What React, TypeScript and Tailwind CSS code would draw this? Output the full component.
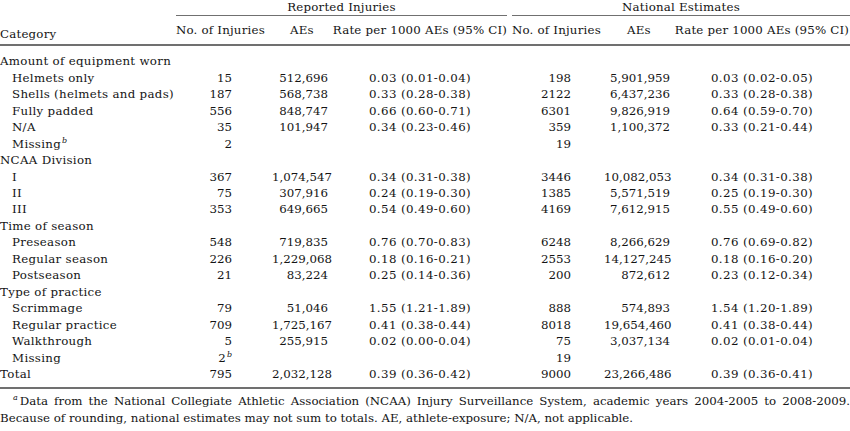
type Row = {
  label: string;
  labelSup?: string;
  indent?: boolean;
  repNo?: string;
  repNoSup?: string;
  repAE?: string;
  repRate?: string;
  natNo?: string;
  natAE?: string;
  natRate?: string;
};

const rows: Row[] = [
  { label: "Amount of equipment worn" },
  { label: "Helmets only", indent: true, repNo: "15", repAE: "512,696", repRate: "0.03 (0.01-0.04)", natNo: "198", natAE: "5,901,959", natRate: "0.03 (0.02-0.05)" },
  { label: "Shells (helmets and pads)", indent: true, repNo: "187", repAE: "568,738", repRate: "0.33 (0.28-0.38)", natNo: "2122", natAE: "6,437,236", natRate: "0.33 (0.28-0.38)" },
  { label: "Fully padded", indent: true, repNo: "556", repAE: "848,747", repRate: "0.66 (0.60-0.71)", natNo: "6301", natAE: "9,826,919", natRate: "0.64 (0.59-0.70)" },
  { label: "N/A", indent: true, repNo: "35", repAE: "101,947", repRate: "0.34 (0.23-0.46)", natNo: "359", natAE: "1,100,372", natRate: "0.33 (0.21-0.44)" },
  { label: "Missing", labelSup: "b", indent: true, repNo: "2", natNo: "19" },
  { label: "NCAA Division" },
  { label: "I", indent: true, repNo: "367", repAE: "1,074,547", repRate: "0.34 (0.31-0.38)", natNo: "3446", natAE: "10,082,053", natRate: "0.34 (0.31-0.38)" },
  { label: "II", indent: true, repNo: "75", repAE: "307,916", repRate: "0.24 (0.19-0.30)", natNo: "1385", natAE: "5,571,519", natRate: "0.25 (0.19-0.30)" },
  { label: "III", indent: true, repNo: "353", repAE: "649,665", repRate: "0.54 (0.49-0.60)", natNo: "4169", natAE: "7,612,915", natRate: "0.55 (0.49-0.60)" },
  { label: "Time of season" },
  { label: "Preseason", indent: true, repNo: "548", repAE: "719,835", repRate: "0.76 (0.70-0.83)", natNo: "6248", natAE: "8,266,629", natRate: "0.76 (0.69-0.82)" },
  { label: "Regular season", indent: true, repNo: "226", repAE: "1,229,068", repRate: "0.18 (0.16-0.21)", natNo: "2553", natAE: "14,127,245", natRate: "0.18 (0.16-0.20)" },
  { label: "Postseason", indent: true, repNo: "21", repAE: "83,224", repRate: "0.25 (0.14-0.36)", natNo: "200", natAE: "872,612", natRate: "0.23 (0.12-0.34)" },
  { label: "Type of practice" },
  { label: "Scrimmage", indent: true, repNo: "79", repAE: "51,046", repRate: "1.55 (1.21-1.89)", natNo: "888", natAE: "574,893", natRate: "1.54 (1.20-1.89)" },
  { label: "Regular practice", indent: true, repNo: "709", repAE: "1,725,167", repRate: "0.41 (0.38-0.44)", natNo: "8018", natAE: "19,654,460", natRate: "0.41 (0.38-0.44)" },
  { label: "Walkthrough", indent: true, repNo: "5", repAE: "255,915", repRate: "0.02 (0.00-0.04)", natNo: "75", natAE: "3,037,134", natRate: "0.02 (0.01-0.04)" },
  { label: "Missing", indent: true, repNo: "2", repNoSup: "b", natNo: "19" },
  { label: "Total", repNo: "795", repAE: "2,032,128", repRate: "0.39 (0.36-0.42)", natNo: "9000", natAE: "23,266,486", natRate: "0.39 (0.36-0.41)" },
];

function Sup({ children }: { children: string }) {
  return <span className="relative top-[-5px] ml-[1px] text-[8px] italic leading-none">{children}</span>;
}

export default function App() {
  return (
    <div className="w-[850px] h-[431px] overflow-hidden bg-white text-[#141414] text-[11.8px] leading-[14px]" style={{ fontFamily: '"DejaVu Serif", serif' }}>
      <table className="w-[850px] table-fixed border-collapse">
        <colgroup>
          <col className="w-[176px]" />
          <col className="w-[96px]" />
          <col className="w-[60px]" />
          <col className="w-[176px]" />
          <col className="w-[96px]" />
          <col className="w-[70px]" />
          <col className="w-[176px]" />
        </colgroup>
        <thead className="tracking-[0.2px]">
          <tr className="h-[16px]">
            <th rowSpan={2} className="p-0 pb-[3px] text-left align-bottom font-normal border-b-2 border-[#707070]">
              Category
            </th>
            <th colSpan={3} className="p-0 align-top font-normal">
              <div className="mr-[1px] border-b border-[#707070] pb-[1px] text-center">Reported Injuries</div>
            </th>
            <th colSpan={3} className="p-0 align-top font-normal">
              <div className="ml-[4px] border-b border-[#707070] pb-[1px] text-center">National Estimates</div>
            </th>
          </tr>
          <tr className="h-[29px] border-b-2 border-[#707070]">
            <th className="p-0 text-left font-normal whitespace-nowrap">No. of Injuries</th>
            <th className="p-0 text-center font-normal">AEs</th>
            <th className="p-0 text-center font-normal whitespace-nowrap">Rate per 1000 AEs (95% CI)</th>
            <th className="p-0 pl-[4px] text-left font-normal whitespace-nowrap">No. of Injuries</th>
            <th className="p-0 text-center font-normal">AEs</th>
            <th className="p-0 text-center font-normal whitespace-nowrap">Rate per 1000 AEs (95% CI)</th>
          </tr>
        </thead>
        <tbody className="border-b-2 border-[#707070]">
          <tr className="h-[8px]">
            <td colSpan={7} className="p-0" />
          </tr>
          {rows.map((row, i) => (
            <tr key={i} className="h-[16.47px]">
              <td className={`p-0 whitespace-nowrap tracking-[0.3px] ${row.indent ? "pl-[12px]" : ""}`}>
                {row.label}
                {row.labelSup ? <Sup>{row.labelSup}</Sup> : null}
              </td>
              <td className="p-0 pr-[40px] text-right">
                {row.repNo}
                {row.repNoSup ? <Sup>{row.repNoSup}</Sup> : null}
              </td>
              <td className="p-0 pr-[4px] text-right">{row.repAE}</td>
              <td className="p-0 text-center whitespace-nowrap tracking-[0.4px]">{row.repRate}</td>
              <td className="p-0 pr-[33px] text-right">{row.natNo}</td>
              <td className="p-0 pr-[4px] text-right">{row.natAE}</td>
              <td className="p-0 text-center whitespace-nowrap tracking-[0.4px]">{row.natRate}</td>
            </tr>
          ))}
          <tr className="h-[6px]">
            <td colSpan={7} className="p-0" />
          </tr>
        </tbody>
      </table>
      <p className="mt-[4px] text-justify leading-[17px] pl-0">
        <span className="relative top-[-5px] ml-[13px] mr-[2px] text-[8px] italic leading-none">a</span>Data from the National Collegiate Athletic Association (NCAA) Injury Surveillance System, academic years 2004-2005 to 2008-2009.
        Because of rounding, national estimates may not sum to totals. AE, athlete-exposure; N/A, not applicable.
      </p>
    </div>
  );
}
